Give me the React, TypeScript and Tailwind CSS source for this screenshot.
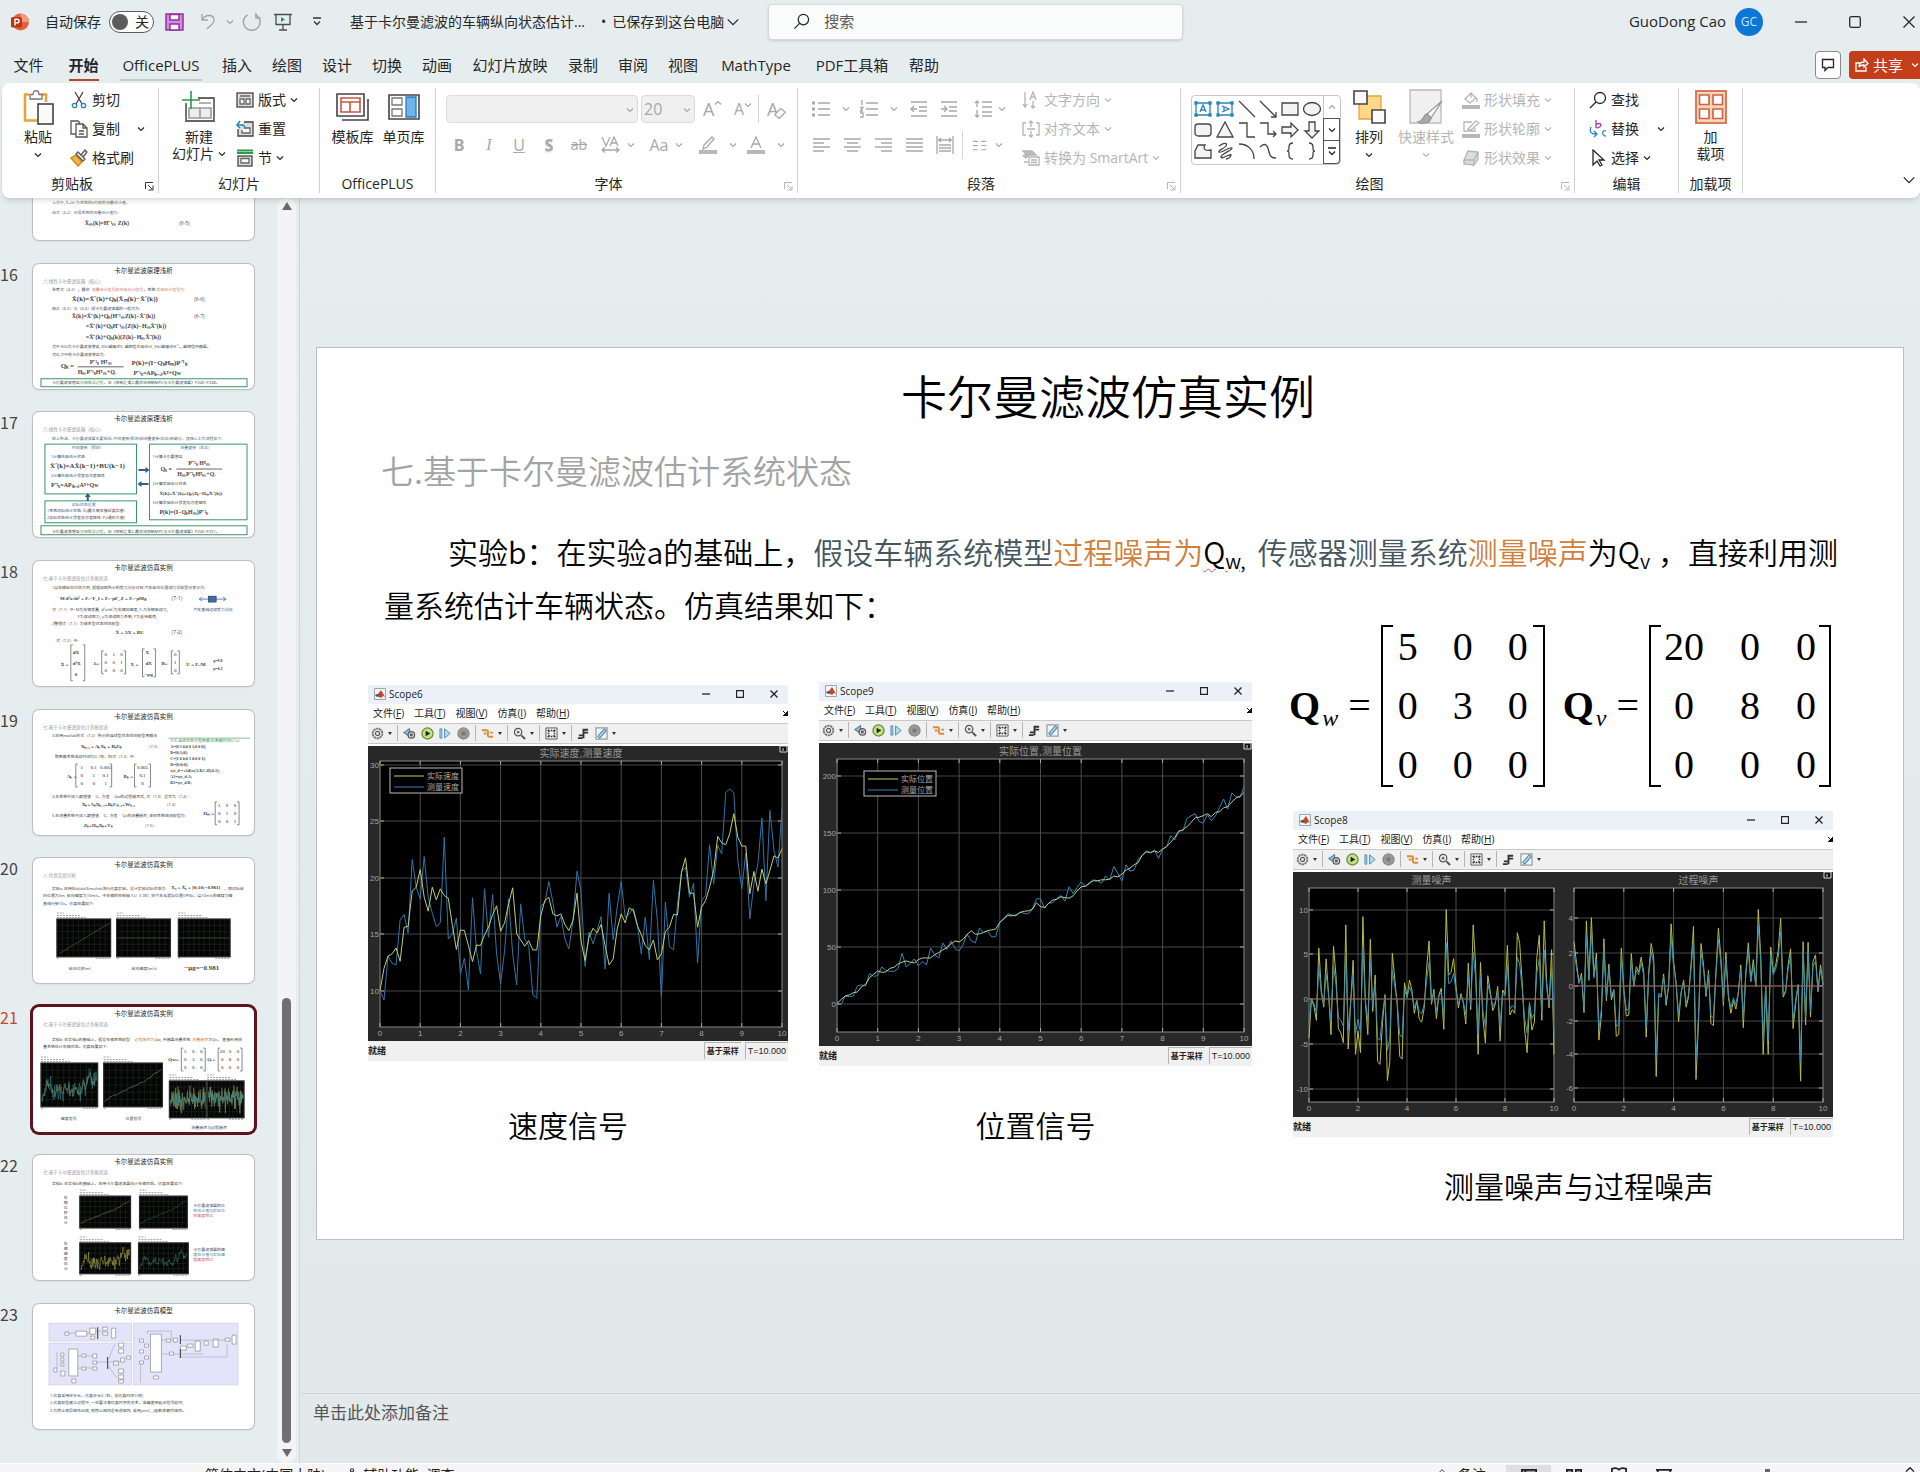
import type { ReactNode } from "react";

type Tab = { name: string; width: string; active?: boolean; marked?: boolean };
type Line = { x: number; y: number; t: string; s?: number; c?: string; math?: boolean };

const CJK = '"Open Sans","Noto Sans CJK SC",sans-serif';
const SERIF = '"Liberation Serif","Noto Sans CJK SC",serif';

const tabs: Tab[] = [
  { name: "文件", width: "w-[57px]" },
  { name: "开始", width: "w-[53px]", active: true },
  { name: "OfficePLUS", width: "w-[102px]", marked: true },
  { name: "插入", width: "w-[50px]" },
  { name: "绘图", width: "w-[50px]" },
  { name: "设计", width: "w-[50px]" },
  { name: "切换", width: "w-[50px]" },
  { name: "动画", width: "w-[50px]" },
  { name: "幻灯片放映", width: "w-[96px]" },
  { name: "录制", width: "w-[50px]" },
  { name: "审阅", width: "w-[50px]" },
  { name: "视图", width: "w-[50px]" },
  { name: "MathType", width: "w-[96px]" },
  { name: "PDF工具箱", width: "w-[96px]" },
  { name: "帮助", width: "w-[48px]" },
];

// Sampled traces, one point every 0.1 s
const speedReal = [960,893,857,850,832,872,770,768,662,650,597,680,722,650,688,655,675,683,765,837,778,780,825,873,823,825,793,770,732,706,782,757,700,652,790,808,827,810,838,838,735,690,680,730,736,730,762,780,750,668,810,870,800,773,787,762,825,883,865,775,730,757,712,720,765,792,825,838,808,868,850,783,770,732,733,605,562,668,668,770,710,690,650,600,498,517,523,490,430,500,527,527,670,603,662,596,640,600,556,563,535];
const speedMeas = [960,988,857,878,883,748,732,787,567,650,685,558,680,728,768,757,500,805,790,742,910,863,957,682,840,910,655,800,672,850,940,840,685,850,943,700,805,825,972,983,706,697,633,695,770,737,805,835,750,602,660,887,785,820,780,738,895,668,808,710,633,740,730,713,760,850,740,867,630,750,980,695,828,838,700,605,590,680,638,877,690,675,523,640,525,550,367,355,367,570,655,548,745,640,580,443,690,420,540,590,415];
const posReal = [1008,996,985,982,975,973,958,951,930,920,910,914,913,902,899,889,884,880,884,886,876,871,871,871,861,855,847,840,829,820,823,815,800,790,800,799,795,789,787,784,765,753,744,745,742,735,731,730,725,706,717,720,707,698,695,688,690,692,685,670,658,656,646,640,640,637,637,635,626,628,620,608,602,592,585,563,553,555,551,555,545,537,525,510,491,487,478,465,451,449,445,439,448,435,433,421,418,404,392,387,376];
const posMeas = [1008,1011,985,987,985,955,952,955,918,926,924,898,908,911,911,903,857,898,888,874,895,882,892,842,862,871,826,845,820,843,850,830,800,820,826,781,795,790,808,807,763,755,738,742,746,733,738,739,725,694,694,722,707,706,693,684,701,658,678,660,643,656,650,637,640,647,625,638,597,617,640,592,611,608,575,565,550,557,547,573,545,538,505,517,490,490,453,445,439,463,467,442,460,445,420,395,425,377,388,390,358];
const measNoise = [1225,1115,1135,1175,973,1090,1138,1003,1100,1215,968,1050,1198,1210,1237,908,1255,1130,1007,1270,1205,1265,885,1120,1215,948,1150,1048,1290,1298,1180,1103,1343,1290,987,1060,1130,1275,1283,1070,1110,1062,1090,1155,1120,1172,1180,1140,1030,953,1130,1088,1170,1105,1085,1200,865,1048,1040,1002,1080,1140,1100,1125,1185,1015,1145,908,1020,1270,1013,1170,1238,1050,1095,1148,1130,1080,1233,1090,1102,965,1160,1145,1155,930,960,1070,1200,1265,1130,1202,1180,1000,937,1175,897,1070,1140,977,1270];
const procNoise = [955,1015,1070,1043,1153,897,1060,888,1050,987,1230,1160,947,1120,1018,1118,1090,1220,1213,973,1090,1163,1160,988,1080,1025,1040,998,1040,1222,1040,960,1000,1332,1105,1110,1045,1133,1080,905,1010,1070,1178,1100,1062,1138,1110,1020,912,1340,1180,960,1020,1108,1035,1183,1190,1040,917,1000,1133,985,1110,1155,1120,1143,1100,1020,1195,1040,958,1065,1005,1080,865,1000,1270,1080,1270,970,1040,1020,980,890,1110,1095,1020,975,1198,1130,1075,1345,955,1188,957,1165,1010,992,1095,1020,1075];

const damp = (data: number[], mid: number, k: number) => data.map((v) => mid + (v - mid) * k);

function trace(data: number[], lo: number, hi: number, x: number, y: number, w: number, h: number) {
  return data
    .map((v, i) => `${(x + (w * i) / (data.length - 1)).toFixed(1)},${(y + (h * (v - lo)) / (hi - lo)).toFixed(1)}`)
    .join(" ");
}

/* ---------- small shared pieces ---------- */

function Chevron({ className = "", up = false }: { className?: string; up?: boolean }) {
  return (
    <svg viewBox="0 0 8 8" className={`h-2 w-2 shrink-0 ${className}`} fill="none" stroke="currentColor" strokeWidth="1.2">
      <path vectorEffect="non-scaling-stroke" d={up ? "M1 5.5 4 2.5 7 5.5" : "M1 2.5 4 5.5 7 2.5"} />
    </svg>
  );
}

function Icon({ children, size = "h-[18px] w-[18px]", box = "0 0 18 18" }: { children: ReactNode; size?: string; box?: string }) {
  return (
    <svg viewBox={box} className={`${size} shrink-0`} fill="none" stroke="currentColor" strokeWidth="1.3">
      {children}
    </svg>
  );
}

function Divider() {
  return <span className="h-7 w-px shrink-0 bg-[#d4d4d4]" />;
}

function Group({ label, width, children, launcher }: { label: string; width: string; children: ReactNode; launcher?: "on" | "off" }) {
  return (
    <section className={`${width} relative flex shrink-0 flex-col border-r border-[#d0d2d3]`}>
      <div className="flex flex-1">{children}</div>
      <h2 className={`h-[18px] text-center text-sm leading-[18px] ${launcher ? "pr-4" : ""}`}>{label}</h2>
      {launcher && (
        <button
          aria-label={`${label}设置`}
          className={`absolute right-1 bottom-0.5 ${launcher === "on" ? "text-[#333]" : "text-[#b5b5b5]"}`}
        >
          <svg viewBox="0 0 9 9" className="h-[9px] w-[9px]" fill="none" stroke="currentColor">
            <path d="M.5 7V.5H8M3 3l4 4M8 3.5V8H3.5" />
          </svg>
        </button>
      )}
    </section>
  );
}

function BigButton({ icon, lines, width, caret, below, off }: { icon: ReactNode; lines: string[]; width: string; caret?: boolean; below?: boolean; off?: boolean }) {
  return (
    <button className={`${width} flex flex-col items-center text-sm leading-[17px] ${off ? "text-[#b5b5b5]" : "text-[#262626]"}`}>
      <span className="flex h-10 items-center pb-0.5">{icon}</span>
      {lines.map((l, i) => (
        <span key={l} className="flex items-center gap-1 whitespace-nowrap">
          {l}
          {caret && i === lines.length - 1 && <Chevron />}
        </span>
      ))}
      {below && <Chevron className="mt-1.5" />}
    </button>
  );
}

function RowButton({ icon, text, caret, caretGap = "ml-1", off }: { icon: ReactNode; text: string; caret?: boolean; caretGap?: string; off?: boolean }) {
  return (
    <button className={`flex h-6 items-center text-sm whitespace-nowrap ${off ? "text-[#b5b5b5]" : "text-[#262626]"}`}>
      {icon}
      <span className="ml-1">{text}</span>
      {caret && <Chevron className={caretGap} />}
    </button>
  );
}

/* ---------- title bar and tabs ---------- */

function TitleBar() {
  return (
    <header className="flex h-[43px] shrink-0 items-center text-sm">
      <svg viewBox="0 0 18 18" className="ml-[11px] h-[18px] w-[18px]">
        <circle cx="9.5" cy="9" r="8.5" fill="#e2613c" />
        <path d="M9.5 .5A8.5 8.5 0 0 1 18 9H9.5z" fill="#f39a7e" />
        <rect x="0" y="4" width="11" height="10.5" rx="1.5" fill="#b5371a" />
        <path d="M4 12.5V6.2h2.2a1.8 1.8 0 0 1 0 3.7H4" fill="none" stroke="#fff" strokeWidth="1.4" />
      </svg>
      <label className="ml-4 flex items-center">
        自动保存
        <input type="checkbox" role="switch" className="peer sr-only" />
        <span className="ml-2 flex h-[22px] w-[45px] items-center justify-between rounded-full border border-[#5c5c5c] bg-white pr-1 pl-0.5">
          <span className="h-4 w-4 rounded-full bg-[#5c5c5c]" />
          关
        </span>
      </label>
      <button aria-label="保存" className="ml-[11px]">
        <svg viewBox="0 0 19 18" className="h-[18px] w-[19px]" fill="#d58be0" stroke="#93329e" strokeWidth="1.5">
          <path d="M1 1h17v16H1z" />
          <path d="M5 1.5h9V7H5z" fill="#fff" />
          <path d="M5 11h9v6H5z" fill="#fff" />
        </svg>
      </button>
      <button aria-label="撤消" className="ml-4 flex items-center gap-2 text-[#a0a5a7]">
        <Icon>
          <path d="M2 1v6h6M2 7C5 1 14 1 14 7c0 4-4 6-7 9" />
        </Icon>
        <Chevron />
      </button>
      <button aria-label="重复" className="ml-2 text-[#a0a5a7]">
        <Icon size="h-5 w-5">
          <path d="M12.5 1v4.500h4.500M12.5 2.500A7.500 7.500 0 1 1 5 2.500" />
        </Icon>
      </button>
      <button aria-label="从头开始" className="ml-3 text-[#4c4c4c]">
        <Icon>
          <path d="M0 1.500h18M2 1.500v10h14v-10M9 11.500v5.500M5 17h8" />
          <path d="M7 4v5l4-2.500z" fill="#2c9a4b" stroke="none" />
        </Icon>
      </button>
      <button aria-label="自定义快速访问工具栏" className="ml-5 text-[#333]">
        <Icon size="h-2.5 w-2.5" box="0 0 10 10">
          <path d="M1 1h8M2 4.500 5 7.500 8 4.500" />
        </Icon>
      </button>
      <h1 className="ml-7 whitespace-nowrap">基于卡尔曼滤波的车辆纵向状态估计...</h1>
      <button className="ml-4 flex items-center whitespace-nowrap">
        •<span className="ml-1.5">已保存到这台电脑</span>
        <Chevron className="ml-0.5 h-3.5 w-3.5" />
      </button>
      <label className="ml-7 flex h-9 w-[415px] items-center rounded border border-[#d5d8d9] bg-[#fafbfb] pl-6 shadow-sm">
        <Icon size="h-[17px] w-[17px]">
          <path d="M7 11 1.500 16.500" />
          <circle cx="11" cy="7" r="5.5" />
        </Icon>
        <input aria-label="搜索" placeholder="搜索" className="ml-3.5 flex-1 bg-transparent text-[15px] outline-none placeholder:text-[#5c5c5c]" />
      </label>
      <span className="ml-auto text-[15px]">GuoDong Cao</span>
      <button className="ml-[9px] h-7 w-7 rounded-full bg-[#0a78d4] text-xs text-[#cfe6fa]">GC</button>
      <button aria-label="最小化" className="ml-8">
        <Icon size="h-3 w-3" box="0 0 12 12"><path d="M0 6h12" /></Icon>
      </button>
      <button aria-label="最大化" className="ml-[42px]">
        <Icon size="h-3 w-3" box="0 0 12 12"><rect x=".7" y=".7" width="10.6" height="10.6" rx="1.5" /></Icon>
      </button>
      <button aria-label="关闭" className="mr-[5px] ml-[42px]">
        <Icon size="h-3 w-3" box="0 0 12 12"><path d="m.5.5 11 11M11.500.5l-11 11" /></Icon>
      </button>
    </header>
  );
}

function TabBar() {
  return (
    <nav className="flex h-10 shrink-0 items-center text-[15px]">
      {tabs.map((tab) => (
        <button key={tab.name} className={`${tab.width} flex h-9 flex-col items-center justify-end whitespace-nowrap ${tab.active ? "font-bold" : ""}`}>
          <span className="leading-7">{tab.name}</span>
          <span className={`h-0.5 ${tab.active ? "w-[30px] bg-[#b7472a]" : tab.marked ? "w-[82px] bg-[#c5c8c9]" : "w-0"}`} />
        </button>
      ))}
      <button aria-label="批注" className="mt-1 ml-auto flex h-7 w-[26px] items-center justify-center rounded border border-[#8a8a8a] bg-white">
        <Icon size="h-3.5 w-3.5" box="0 0 14 14"><path d="M1.500 1.500h11v8H7l-3 3v-3H1.500z" /></Icon>
      </button>
      <button className="mt-1 ml-2 flex h-7 w-[71px] items-center rounded-l bg-[#c43e1c] pl-1.5 text-white">
        <Icon size="h-3.5 w-3.5" box="0 0 14 14"><path d="M5 5H1v8h10V9M4 9c0-4 3-5 5-5V1l4 4.500L9 9V7C7 7 5 7 4 9z" /></Icon>
        <span className="ml-1 whitespace-nowrap">共享</span>
        <Chevron className="ml-2" />
      </button>
    </nav>
  );
}

/* ---------- ribbon ---------- */

function ClipboardGroup() {
  return (
    <Group label="剪贴板" width="w-[157px]" launcher="on">
      <div className="ml-[18px]">
        <BigButton
          width="w-9"
          lines={["粘贴"]}
          below
          icon={
            <Icon size="h-[35px] w-[31px]" box="0 0 31 35">
              <path d="M6 4.500H2v26h12M18 4.500h5V12" stroke="#e7a33a" strokeWidth="2.6" />
              <path d="M7 9V4.500h3c0-5 6-5 6 0h3V9z" fill="#fff" stroke="#777" />
              <rect x="15" y="14" width="15" height="20" fill="#fafafa" stroke="#444" strokeWidth="1.6" />
            </Icon>
          }
        />
      </div>
      <div className="ml-3.5 flex flex-col gap-[5px]">
        <RowButton
          text="剪切"
          icon={
            <Icon>
              <path d="M5 1 12 13M13 1 6 13" stroke="#444" />
              <circle cx="4.5" cy="14.5" r="2.2" stroke="#2a85b8" />
              <circle cx="13.5" cy="14.5" r="2.2" stroke="#2a85b8" />
            </Icon>
          }
        />
        <RowButton
          text="复制"
          caret
          caretGap="ml-[17px]"
          icon={
            <Icon>
              <path d="M6 14H1V1h7l2 2M6 4h7l4 4v9H6zM13 4v4h4M9 11h5M9 14h5" stroke="#555" />
            </Icon>
          }
        />
        <RowButton
          text="格式刷"
          icon={
            <Icon>
              <path d="m1 9 7 8 4-4-6-7z" fill="#f0b24a" stroke="#c98412" />
              <path d="m6 5 7 7 2-2-7-7zM11 6l4-5 2 2-4 5" fill="#fff" stroke="#555" />
            </Icon>
          }
        />
      </div>
    </Group>
  );
}

function SlidesGroup() {
  return (
    <Group label="幻灯片" width="w-[161px]">
      <div className="ml-3">
        <BigButton
          width="w-14"
          lines={["新建", "幻灯片"]}
          caret
          icon={
            <Icon size="h-9 w-[34px]" box="0 0 34 36">
              <path d="M4 14v18h28V9H16" stroke="#666" strokeWidth="1.8" />
              <path d="M7 19h22v10H7zM18 19v10M17 14h12" stroke="#999" strokeWidth="1.6" fill="#eee" />
              <path d="M9 2v18M0 11h18" stroke="#2c9a4b" strokeWidth="1.6" />
            </Icon>
          }
        />
      </div>
      <div className="ml-[9px] flex flex-col gap-[5px]">
        <RowButton text="版式" caret icon={
          <Icon><rect x="1" y="2" width="16" height="14" fill="#ddd" stroke="#444" /><path d="M4 5h10M4 8h4v5H4zM10 8h4v5h-4z" stroke="#666" fill="#fff" /></Icon>
        } />
        <RowButton text="重置" icon={
          <Icon><path d="M8 2h9v14H2V9" fill="#ddd" stroke="#444" /><path d="M9 8h5v5H6v-3" stroke="#666" fill="#fff" /><path d="M1 5h6M4 1 1 5l3 3M5 5c4 0 4 2 4 4" stroke="#2a85b8" strokeWidth="1.6" /></Icon>
        } />
        <RowButton text="节" caret icon={
          <Icon><path d="M1 1.500h16M1 4h16" stroke="#2c9a4b" strokeWidth="2" /><rect x="2" y="7" width="14" height="10" fill="#ddd" stroke="#444" /><path d="M5 9.500h8V14H5z" stroke="#666" fill="#fff" /></Icon>
        } />
      </div>
    </Group>
  );
}

function PlusGroup() {
  return (
    <Group label="OfficePLUS" width="w-[116px]">
      <div className="ml-[7px] flex">
        <BigButton width="w-[51px]" lines={["模板库"]} icon={
          <Icon size="h-8 w-[34px]" box="0 0 34 32">
            <path d="M1 3h27v22H1z" stroke="#444" strokeWidth="1.6" />
            <path d="M5 7h19v4H5zM5 11h9v10H5zM14 11h10v10H14z" stroke="#c9553f" strokeWidth="1.6" />
            <path d="M6 29h26V8" stroke="#444" strokeWidth="1.6" />
          </Icon>
        } />
        <BigButton width="w-[51px]" lines={["单页库"]} icon={
          <Icon size="h-8 w-8" box="0 0 32 32">
            <path d="M1 4h30v24H1z" stroke="#444" strokeWidth="1.6" />
            <path d="M4 7h10v7H4zM4 18h10v7H4z" stroke="#777" />
            <path d="M18 6h10v20H18z" fill="#6fb4ea" stroke="#2a7ab8" />
          </Icon>
        } />
      </div>
    </Group>
  );
}

function FontGroup() {
  return (
    <Group label="字体" width="w-[362px]" launcher="off">
      <div className="ml-2 flex flex-col gap-2 pt-[7px] text-[#a8a8a8]">
        <div className="flex h-7 items-center">
          <div className="relative ml-0.5">
            <select aria-label="字体" disabled className="h-7 w-[192px] appearance-none rounded border border-[#dcdcdc] bg-[#f0f0f0]">
              <option></option>
            </select>
            <Chevron className="pointer-events-none absolute top-[11px] right-1" />
          </div>
          <div className="relative ml-[3px]">
            <select aria-label="字号" disabled className="h-7 w-[54px] appearance-none rounded border border-[#dcdcdc] bg-[#f0f0f0] pl-0.5 text-base">
              <option>20</option>
            </select>
            <Chevron className="pointer-events-none absolute top-[11px] right-1" />
          </div>
          <button aria-label="增大字号" className="ml-2 flex w-6 text-lg">A<Chevron up className="mt-1" /></button>
          <button aria-label="减小字号" className="ml-[7px] flex w-6 text-base">A<Chevron className="mt-1" /></button>
          <span className="flex"><Divider /></span>
          <button aria-label="清除格式" className="ml-2 flex w-6 items-center text-lg">
            A
            <Icon size="-ml-1 mt-2 h-3 w-3"><path d="m1 12 9-10 7 6-9 9z" strokeWidth="2" fill="#fff" /></Icon>
          </button>
        </div>
        <div className="flex h-7 items-center text-base">
          <button className="w-[30px] font-bold">B</button>
          <button className="w-[30px] font-['Liberation_Serif',serif] italic">I</button>
          <button className="w-[30px] underline">U</button>
          <button className="w-[30px] font-bold text-shadow-sm">S</button>
          <button className="w-[30px] text-sm line-through">ab</button>
          <button aria-label="字符间距" className="flex w-12 items-center justify-center gap-1.5 text-sm">
            <Icon box="0 0 20 18" size="h-[18px] w-5"><path d="m1 1 4 9L9 1M9 10l4-9 4 9M10.500 7h5M1 14h17M4 11.500 1 14l3 2.500M15 11.500l3 2.500-3 2.500" /></Icon><Chevron />
          </button>
          <button aria-label="更改大小写" className="flex w-12 items-center justify-center gap-1.5 text-base">Aa<Chevron /></button>
          <span className="ml-1"><Divider /></span>
          <button aria-label="突出显示" className="flex w-12 items-center justify-center gap-3">
            <Icon><path d="m5 9 8-8 2 2-7 8-4 2z" /><path d="M0 16h18" strokeWidth="4" stroke="#b8b8b8" /></Icon><Chevron />
          </button>
          <button aria-label="字体颜色" className="flex w-12 items-center justify-center gap-3">
            <Icon><path d="m4 12 5-11 5 11M6 8h6" /><path d="M0 16h18" strokeWidth="4" stroke="#b8b8b8" /></Icon><Chevron />
          </button>
        </div>
      </div>
    </Group>
  );
}

function ParagraphGroup() {
  return (
    <Group label="段落" width="w-[383px]" launcher="off">
      <div className="ml-3.5 flex w-[196px] flex-col gap-2 pt-[7px] text-[#a8a8a8]">
        <div className="flex h-7 items-center">
          <button aria-label="项目符号" className="flex items-center gap-3">
            <Icon><path d="M6 3h12M6 9h12M6 15h12" /><path d="M0 3h3M0 9h3M0 15h3" strokeWidth="3" /></Icon><Chevron />
          </button>
          <button aria-label="编号" className="ml-2.5 flex items-center gap-3">
            <Icon><path d="M6 3h12M6 9h12M6 15h12M1 1h1v4M0 7.500h3L.5 11H3M0 13h3v4H0" /></Icon><Chevron />
          </button>
          <span className="ml-1"><Divider /></span>
          <button aria-label="减少缩进" className="ml-2">
            <Icon><path d="M1 2h16M9 7h8M9 11h8M1 16h16M7 9H1M4 6 1 9l3 3" /></Icon>
          </button>
          <button aria-label="增加缩进" className="ml-3">
            <Icon><path d="M1 2h16M9 7h8M9 11h8M1 16h16M1 9h6M4 6l3 3-3 3" /></Icon>
          </button>
          <span className="ml-2"><Divider /></span>
          <button aria-label="行距" className="ml-2 flex items-center gap-1.5">
            <Icon><path d="M8 2h10M8 7h10M8 12h10M8 16h10M3 1v6M1 3l2-2 2 2M3 10v7M1 15l2 2 2-2" /></Icon><Chevron />
          </button>
        </div>
        <div className="flex h-7 items-center gap-[13px]">
          <button aria-label="左对齐"><Icon><path d="M1 3h17M1 7h11M1 11h17M1 15h11" /></Icon></button>
          <button aria-label="居中"><Icon><path d="M1 3h17M4 7h11M1 11h17M4 15h11" /></Icon></button>
          <button aria-label="右对齐"><Icon><path d="M1 3h17M7 7h11M1 11h17M7 15h11" /></Icon></button>
          <button aria-label="两端对齐"><Icon><path d="M1 3h17M1 7h17M1 11h17M1 15h17" /></Icon></button>
          <button aria-label="分散对齐" className="flex items-center gap-2">
            <Icon><path d="M1 0v18M17 0v18M2 4h14M5 2 3 4l2 2M13 2l2 2-2 2M3 9h12M3 12h12M3 15h12" /></Icon><Divider />
          </button>
          <button aria-label="分栏" className="-ml-1 flex items-center gap-2">
            <Icon size="h-[15px] w-[15px]"><path d="M1 4h6M1 9h6M1 14h6M11 4h6M11 9h6M11 14h6" /></Icon><Chevron />
          </button>
        </div>
      </div>
      <div className="ml-3.5 flex flex-col gap-[5px]">
        <RowButton off caret text="文字方向" icon={<Icon><path d="M3 1v15M1 13l2 3 2-3M8 9l3-8 3 8M9 6h4M11 10v7M9 15l2 2 2-2" /></Icon>} />
        <RowButton off caret text="对齐文本" icon={<Icon><path d="M4 3H1v12h3M14 3h3v12h-3M5 9h8M9 1v6M7 3l2-2 2 2M9 17v-6M7 15l2 2 2-2" /></Icon>} />
        <RowButton off caret text="转换为 SmartArt" icon={<Icon><path d="M1 2h9l4 4H7L4 9 1 7l3-2zM2 13h4" fill="#bbb" /><path d="M7 8h10v8H7zM9 11h6M9 13.500h6" fill="#fff" /></Icon>} />
      </div>
    </Group>
  );
}

const shapes: ReactNode[] = [
  <g stroke="#2a85b8"><path d="M2 3h14v12H2z" /><path d="M6 12l3-7 3 7M7 10h4" /><path d="M1 2h2v2H1zM15 2h2v2h-2zM1 14h2v2H1zM15 14h2v2h-2z" fill="#2a85b8" /></g>,
  <g stroke="#2a85b8"><path d="M2 3h14v12H2z" /><path d="M6 6l7 3-7 3M8 7v4" /><path d="M1 2h2v2H1zM15 2h2v2h-2zM1 14h2v2H1zM15 14h2v2h-2z" fill="#2a85b8" /></g>,
  <path d="m1 1 16 16" />,
  <path d="m1 1 16 16M17 12v5h-5" />,
  <path d="M1 3h16v12H1z" fill="#f4f4f4" />,
  <ellipse cx="9" cy="9" rx="8.5" ry="6.5" fill="#f4f4f4" />,
  <rect x="1" y="3" width="16" height="12" rx="3" fill="#f4f4f4" />,
  <path d="M9 1 17 16H1z" fill="#f4f4f4" />,
  <path d="M1 2h8v14h8" />,
  <path d="M1 2h8v11h8M14 10l3 3-3 3" />,
  <path d="M1 6h9V2l7 7-7 7v-4H1z" fill="#f4f4f4" />,
  <path d="M6 1v9H2l7 7 7-7h-4V1z" fill="#f4f4f4" />,
  <path d="M4 3h7c-3 5 2 6 6 5v8H1V9z" fill="#f4f4f4" />,
  <path d="M3 4c5-4 9-3 7 0S2 8 3 10s12-6 13-4-11 6-11 9 10-4 10-2-3 4-5 4" />,
  <path d="M1 2c9 0 15 6 15 15" />,
  <path d="M1 5c6-6 8 0 9 5s3 6 7 6" />,
  <path d="M12 1c-3 0-4 1-4 4s0 4-2 4c2 0 2 1 2 4s1 4 4 4" />,
  <path d="M6 1c3 0 4 1 4 4s0 4 2 4c-2 0-2 1-2 4s-1 4-4 4" />,
];

function DrawingGroup() {
  return (
    <Group label="绘图" width="w-[394px]" launcher="off">
      <div className="mt-[7px] ml-[10px] flex h-[70px] w-[150px] rounded border border-[#c8c8c8]">
        <div className="grid flex-1 grid-cols-6 place-items-center py-0.5 text-[#444]">
          {shapes.map((s, i) => (
            <button key={i} aria-label={`形状 ${i + 1}`}><Icon size="h-[18px] w-[18px]">{s}</Icon></button>
          ))}
        </div>
        <div className="flex w-[17px] flex-col">
          <button aria-label="上一行" className="flex flex-1 items-center justify-center border-l border-[#c8c8c8] text-[#aaa]"><Chevron up /></button>
          <button aria-label="下一行" className="flex flex-1 items-center justify-center border border-[#555]"><Chevron /></button>
          <button aria-label="其他" className="flex flex-1 items-center justify-center rounded-br border border-t-0 border-[#555]">
            <Icon size="h-2.5 w-2.5" box="0 0 10 10"><path d="M1 1h8M2 4.500 5 7.500 8 4.500" /></Icon>
          </button>
        </div>
      </div>
      <div className="ml-[6px] flex gap-[7px]">
        <BigButton width="w-11" lines={["排列"]} below icon={
          <Icon size="h-[34px] w-[33px]" box="0 0 33 34">
            <path d="M6 6h22v23H6z" fill="#fbd88a" stroke="#e0a53c" />
            <path d="M1 1h13v13H1zM19 20h13v13H19z" fill="#fafafa" stroke="#444" strokeWidth="1.6" />
          </Icon>
        } />
        <BigButton off width="w-14" lines={["快速样式"]} below icon={
          <Icon size="h-[36px] w-[34px]" box="0 0 34 36">
            <path d="M1 1h31v33H1z" fill="#f0f0f0" stroke="#bbb" />
            <path d="M33 12 22 29l-4-4z" fill="#fff" stroke="#999" />
            <path d="M18 25c-4 0-3 7-9 8 5 3 12 1 13-4z" fill="#aaa" stroke="#999" />
          </Icon>
        } />
      </div>
      <div className="ml-2 flex flex-col gap-[5px]">
        <RowButton off caret text="形状填充" icon={<Icon><path d="m3 8 6-6 5 5-6 5zM9 2v5M15 7v4" /><path d="M0 16h18" strokeWidth="4" stroke="#b8b8b8" /></Icon>} />
        <RowButton off caret text="形状轮廓" icon={<Icon><path d="M10 2H2v9h11V8M6 9l8-8 3 2-8 7z" /><path d="M0 16h18" strokeWidth="4" stroke="#b8b8b8" /></Icon>} />
        <RowButton off caret text="形状效果" icon={<Icon><path d="m6 2 10 1-4 8H2zM12 11l4-8v7l-4 6zM2 11v4l10 1v-5" fill="#ddd" /></Icon>} />
      </div>
    </Group>
  );
}

function EditGroup() {
  return (
    <Group label="编辑" width="w-[104px]">
      <div className="ml-[14px] flex flex-col gap-[5px]">
        <RowButton text="查找" icon={<Icon><path d="M7 11 1 17" /><circle cx="11" cy="7" r="5.5" /></Icon>} />
        <RowButton text="替换" caret caretGap="ml-[18px]" icon={
          <Icon>
            <path d="M7 0v8M7 5c1-2 5-2 5 0s-4 4-5 2" stroke="#a33fae" />
            <path d="M17 11c-4-2-5 5 0 5M2 7c-2 5 0 7 5 7M5 11l3 3-3 3" stroke="#2a85c8" />
          </Icon>
        } />
        <RowButton text="选择" caret icon={<Icon><path d="M4 1v15l4-4 3 5 2-1-3-5h5z" /></Icon>} />
      </div>
    </Group>
  );
}

function AddinGroup() {
  return (
    <Group label="加载项" width="w-16">
      <BigButton width="w-16" lines={["加", "载项"]} icon={
        <Icon size="h-[34px] w-8" box="0 0 32 34">
          <rect x="1" y="1" width="30" height="32" fill="#f9d3bd" stroke="#d2704a" strokeWidth="1.8" />
          <path d="M4.500 5h9.500v9.500H4.500zM18 5h9.500v9.500H18zM4.500 19h9.500v9.500H4.500zM18 19h9.500v9.500H18z" fill="#fff" stroke="#c9643f" strokeWidth="1.6" />
        </Icon>
      } />
    </Group>
  );
}

function Ribbon() {
  return (
    <div className="relative z-10 ml-0.5 flex h-[115px] shrink-0 rounded-lg bg-white py-[5px] shadow-md">
      <ClipboardGroup />
      <SlidesGroup />
      <PlusGroup />
      <FontGroup />
      <ParagraphGroup />
      <DrawingGroup />
      <EditGroup />
      <AddinGroup />
      <button aria-label="折叠功能区" className="mr-1 mb-1.5 ml-auto self-end">
        <Chevron className="h-3.5 w-3.5" />
      </button>
    </div>
  );
}

/* ---------- thumbnails ---------- */

function Lines({ items }: { items: Line[] }) {
  return (
    <>
      {items.map((l, i) => (
        <text
          key={i}
          x={l.x}
          y={l.y}
          fontSize={l.s ?? 4}
          fill={l.c ?? "#444"}
          fontFamily={l.math ? SERIF : CJK}
          fontWeight={l.math ? 700 : 400}
        >
          {l.t}
        </text>
      ))}
    </>
  );
}

function ThumbTitle({ title, sub }: { title: string; sub?: string }) {
  return (
    <>
      <text x="111" y="9" fontSize="6.5" textAnchor="middle" fill="#222" fontFamily={CJK}>{title}</text>
      {sub && <text x="10" y="19" fontSize="4.6" fill="#999" fontFamily={CJK}>{sub}</text>}
    </>
  );
}

function MiniScope({ x, y, w, h, children }: { x: number; y: number; w: number; h: number; children?: ReactNode }) {
  const cols = Array.from({ length: 9 }, (_, i) => x + ((i + 1) * w) / 10);
  const rows = Array.from({ length: 5 }, (_, i) => y + 6 + ((i + 1) * (h - 6)) / 6);
  return (
    <g>
      <path d={`M${x} ${y}h7M${x} ${y + 2.5}h24M${x} ${y + 4.5}h30M${x} ${y + h + 1.5}h3M${x + w - 15} ${y + h + 1.5}h15`} stroke="#888" strokeWidth=".8" strokeDasharray="2 1" />
      <rect x={x} y={y + 6} width={w} height={h - 6} fill="#050505" stroke="#2a2a2a" strokeWidth="1.2" />
      {cols.map((c) => <path key={c} d={`M${c} ${y + 7}v${h - 8}`} stroke="#1e2a22" strokeWidth=".6" />)}
      {rows.map((r) => <path key={r} d={`M${x + 1} ${r}h${w - 2}`} stroke="#1e2a22" strokeWidth=".6" />)}
      <g fill="none" strokeWidth=".5">{children}</g>
    </g>
  );
}

function Brackets({ x, y, w, h }: { x: number; y: number; w: number; h: number }) {
  return <path d={`M${x + 2} ${y}h-2v${h}h2M${x + w - 2} ${y}h2v${h}h-2`} fill="none" stroke="#555" strokeWidth=".7" />;
}

function MiniMatrix({ x, y, rows, step = 8 }: { x: number; y: number; rows: string[][]; step?: number }) {
  return (
    <g>
      <Brackets x={x} y={y} w={step * rows[0].length} h={23} />
      {rows.map((r, i) =>
        r.map((c, j) => (
          <text key={`${i}${j}`} x={x + step * (j + 0.5)} y={y + 5 + i * 8} fontSize="5" textAnchor="middle" fill="#222" fontFamily={SERIF}>{c}</text>
        ))
      )}
    </g>
  );
}

const thumb15: Line[] = [
  { x: 19, y: 89, t: "上式中,  X̂ₘ(k) 为系统的k时刻的测量估计值。", c: "#557766" },
  { x: 19, y: 99, t: "由式（6-4）可得系统的测量估计值为:", c: "#4f6473" },
  { x: 52, y: 110, t: "X̂ₘ(k)=H⁻¹ₘ Z(k)", s: 6, math: true },
  { x: 147, y: 110, t: "(6-5)", s: 5 },
];

const thumb16: Line[] = [
  { x: 19, y: 27, t: "参考式（4-2），最优" },
  { x: 59, y: 27, t: "测量估计信号和先验估计信号", c: "#c9775d" },
  { x: 111, y: 27, t: "，系统" },
  { x: 124, y: 27, t: "后验估计信号为:", c: "#c9775d" },
  { x: 39, y: 37, t: "X̂(k)=X̂⁻(k)+Qₖ(X̂ₘ(k)−X̂⁻(k))", s: 7, math: true },
  { x: 162, y: 37, t: "(6-6)", s: 5 },
  { x: 19, y: 46, t: "结合（6-5）与（6-6）得卡尔曼滤波器的一般式为:" },
  { x: 39, y: 54, t: "X̂(k)=X̂⁻(k)+Qₖ(H⁻¹ₘZ(k)−X̂⁻(k))", s: 6, math: true },
  { x: 162, y: 54, t: "(6-7)", s: 5 },
  { x: 53, y: 64, t: "=X̂⁻(k)+QₖH⁻¹ₘ(Z(k)−HₘX̂⁻(k))", s: 6, math: true },
  { x: 53, y: 75, t: "=X̂⁻(k)+Qₖ(k)(Z(k)−HₘX̂⁻(k))", s: 6, math: true },
  { x: 19, y: 84, t: "式中 K(k)为卡尔曼滤波增益, K(k)越接近0, 越相信先验估计, K(k)越接近H⁻¹ₘ, 越相信传感器。", s: 4 },
  { x: 19, y: 92, t: "式(6-7)中的卡尔曼滤波增益为:" },
  { x: 28, y: 104, t: "Qₖ =", s: 7, math: true },
  { x: 57, y: 100, t: "P⁻¹ₖ Hᵀₘ", s: 6, math: true },
  { x: 45, y: 110, t: "HₘP⁻¹ₖHᵀₘ+Qᵥ", s: 6, math: true },
  { x: 99, y: 101, t: "P(k)=(I−QₖHₘ)P⁻¹ₖ", s: 7, math: true },
  { x: 101, y: 111, t: "P⁻¹ₖ=AP₍ₖ₋₁₎Aᵀ+Qw", s: 6, math: true },
  { x: 19, y: 120, t: "卡尔曼滤波增益", s: 4 },
  { x: 47, y: 120, t: "详细推导过程", s: 4, c: "#5a9a6d" },
  { x: 71, y: 120, t: "，见《控制之美2-最优化控制MPC与卡尔曼滤波器》P240~P248。", s: 4 },
];

const thumb17: Line[] = [
  { x: 19, y: 28, t: "综上所述，卡尔曼滤波器主要包括: 时间更新(预测)和测量更新(校正)两部分，其核心工作流程如下:", c: "#4f6473" },
  { x: 39, y: 37, t: "时间更新（预测）", c: "#3a6fa5" },
  { x: 18, y: 46, t: "1计算先验估计状态", s: 4 },
  { x: 17, y: 56, t: "X̂⁻(k)=AX̂(k−1)+BU(k−1)", s: 7, math: true },
  { x: 18, y: 65, t: "2计算先验估计误差协方差矩阵", s: 4 },
  { x: 18, y: 75, t: "P⁻¹ₖ=AP₍ₖ₋₁₎Aᵀ+Qw", s: 6, math: true },
  { x: 39, y: 94, t: "初始状态设置", c: "#3a6fa5" },
  { x: 14, y: 100, t: "1系统初始估计状态: X̂₀(最大概率接近真实值)", s: 4 },
  { x: 14, y: 107, t: "2初始状态估计误差协方差矩阵: P₀(通较大值)", s: 4 },
  { x: 148, y: 37, t: "测量更新（校正）", c: "#3a6fa5" },
  { x: 120, y: 46, t: "1计算卡尔曼增益", s: 4 },
  { x: 128, y: 59, t: "Qₖ =", s: 6, math: true },
  { x: 156, y: 53, t: "P⁻¹ₖ Hᵀₘ", s: 6, math: true },
  { x: 145, y: 64, t: "HₘP⁻¹ₖHᵀₘ+Qᵥ", s: 6, math: true },
  { x: 120, y: 73, t: "2计算后验估计状态", s: 4 },
  { x: 127, y: 83, t: "X̂(k)=X̂⁻(k)+Qₖ(Zₖ−HₘX̂⁻(k))", s: 5, math: true },
  { x: 120, y: 92, t: "3计算后验估计误差协方差矩阵", s: 4 },
  { x: 127, y: 102, t: "P(k)=(I−QₖHₘ)P⁻¹ₖ", s: 6, math: true },
  { x: 19, y: 121, t: "卡尔曼滤波增益", s: 4 },
  { x: 47, y: 121, t: "详细推导过程", s: 4, c: "#5a9a6d" },
  { x: 71, y: 121, t: "，见《控制之美2-最优化控制MPC与卡尔曼滤波器》P240~P251。", s: 4 },
];

const thumb18: Line[] = [
  { x: 19, y: 28, t: "1以车辆纵向位移为例, 根据如图所示的受力分析可知 汽车纵向位置动力学模型可表示为:" },
  { x: 27, y: 39, t: "M d²x/dt² = Fₓ−F_f = Fₓ−μF_Z = Fₓ−μMg", s: 5, math: true },
  { x: 136, y: 39, t: "（7-1）", s: 5 },
  { x: 19, y: 50, t: "式（7-1）中: M为车辆质量, d²x/dt²为车辆加速度, Fₓ为车辆驱动力," },
  { x: 45, y: 57, t: "F为滚动阻力; μ为滚动阻力系数; F为支持载荷;" },
  { x: 161, y: 50, t: "汽车直线运动受力分析" },
  { x: 19, y: 64, t: "2整理式（7-1）为微系型状态空间模型:" },
  { x: 83, y: 73, t: "Ẋ = AX + BU", s: 5, math: true },
  { x: 136, y: 73, t: "（7-2）", s: 5 },
  { x: 23, y: 81, t: "式（7-2）中:" },
  { x: 28, y: 105, t: "Ẋ =", s: 5, math: true },
  { x: 40, y: 93, t: "dX", s: 5, math: true },
  { x: 40, y: 104, t: "d²X", s: 5, math: true },
  { x: 42, y: 115, t: "0", s: 5, math: true },
  { x: 60, y: 104, t: "A=", s: 5, math: true },
  { x: 98, y: 105, t: "X =", s: 5, math: true },
  { x: 113, y: 93, t: "X", s: 5, math: true },
  { x: 113, y: 104, t: "dX", s: 5, math: true },
  { x: 112, y: 115, t: "−μg", s: 5, math: true },
  { x: 129, y: 104, t: "B=", s: 5, math: true },
  { x: 154, y: 105, t: "U = Fₓ/M", s: 5, math: true },
  { x: 181, y: 101, t: "g=9.8", s: 4, math: true },
  { x: 181, y: 109, t: "μ=0.1", s: 4, math: true },
];

const thumb19: Line[] = [
  { x: 19, y: 27, t: "3.应用matlab将式（7-2）所示的连续型状态空间模型离散化" },
  { x: 48, y: 38, t: "Xₖ₊₁ = AₖXₖ + BₖUₖ", s: 5, math: true },
  { x: 114, y: 38, t: "（7-3）" },
  { x: 22, y: 48, t: "取离散系统采样时间为0.1秒，则式（7-3）中:" },
  { x: 34, y: 68, t: "Aₖ =", s: 5, math: true },
  { x: 91, y: 68, t: "Bₖ =", s: 5, math: true },
  { x: 138, y: 32, t: "%% 连续状态方程离散化(离散时间0.1s)", c: "#3a8f57" },
  { x: 138, y: 38, t: "A=[0 1 0;0 0 1;0 0 0];", math: true },
  { x: 138, y: 44, t: "B=[0;1;0];", math: true },
  { x: 138, y: 50, t: "C=[1 0 0;0 1 0;0 0 1];", math: true },
  { x: 138, y: 56, t: "D=[0;0;0];", math: true },
  { x: 138, y: 62, t: "sys_d = c2d(ss(A,B,C,D),0.1);", math: true },
  { x: 138, y: 68, t: "A1=sys_d.A;", math: true },
  { x: 138, y: 74, t: "B1=sys_d.B;", math: true },
  { x: 19, y: 88, t: "4.在系统中加入期望值==0，方差==Qw的过程噪声后, 式（7-3）重写为（7-4）:" },
  { x: 49, y: 96, t: "Xₖ=AₖXₖ₋₁+BₖUₖ₋₁+Wₖ₋₁", s: 5, math: true },
  { x: 132, y: 96, t: "（7-4）" },
  { x: 19, y: 107, t: "5.在测量系统中加入期望值==0，方差==Qv的测量噪声, 该控系统观测模型为:" },
  { x: 51, y: 117, t: "Zₖ=HₘXₖ+Vₖ", s: 5, math: true },
  { x: 110, y: 117, t: "（7-5）" },
  { x: 171, y: 105, t: "Hₘ =", s: 5, math: true },
];

const thumb20: Line[] = [
  { x: 19, y: 32, t: "实验a: 应用Matlab/Simulink进行仿真实验。设计实验初始状态为" },
  { x: 139, y: 31, t: "X₀ = X̂₀ = [0;10;−0.981]", s: 5, math: true },
  { x: 192, y: 32, t: "，即初始纵" },
  { x: 10, y: 39, t: "向位置为0m, 纵向速度为10m/s。今车辆的控制输入U=0.981, 则汽车从起始位置0开始，以10m/s的速度匀速" },
  { x: 10, y: 47, t: "直线行驶10s。仿真结果如下:" },
  { x: 36, y: 112, t: "纵向位移(m)" },
  { x: 99, y: 112, t: "纵向速度(m/s)" },
  { x: 152, y: 112, t: "−μg=−0.981", s: 7, math: true },
];

const thumb21: Line[] = [
  { x: 19, y: 34, t: "实验b: 在实验a的基础上，假设车辆系统模型" },
  { x: 102, y: 34, t: "过程噪声为", c: "#d2763f" },
  { x: 122, y: 34, t: "Qw, 传感器测量系统" },
  { x: 160, y: 34, t: "测量噪声", c: "#d2763f" },
  { x: 176, y: 34, t: "为Qv， 直接利用测" },
  { x: 10, y: 41, t: "量系统估计车辆状态。仿真结果如下:" },
  { x: 136, y: 54, t: "Qw=", s: 5, math: true },
  { x: 175, y: 54, t: "Qᵥ=", s: 5, math: true },
  { x: 28, y: 113, t: "速度信号" },
  { x: 93, y: 113, t: "位置信号" },
  { x: 159, y: 122, t: "测量噪声与过程噪声" },
];

const thumb22: Line[] = [
  { x: 19, y: 30, t: "实验b: 在实验b的基础上，应用卡尔曼滤波器估计车辆状态。仿真结果如下:" },
  { x: 161, y: 52, t: "卡尔曼滤波器的位" },
  { x: 161, y: 57, t: "移估计值与实际位", c: "#4d7a8a" },
  { x: 161, y: 62, t: "移高度吻合", c: "#cc5a4a" },
  { x: 161, y: 96, t: "卡尔曼滤波器的速" },
  { x: 161, y: 101, t: "度估计值与实际速", c: "#4d7a8a" },
  { x: 161, y: 106, t: "度高度吻合", c: "#cc5a4a" },
  ..."车辆位移估计".split("").map((t, i) => ({ x: 31, y: 44 + i * 5, t })),
  ..."车辆速度估计".split("").map((t, i) => ({ x: 31, y: 90 + i * 5, t })),
];

const thumb23: Line[] = [
  { x: 17, y: 93, t: "1.仿真采用定步长，仿真步长0.1秒，总仿真时间10秒;" },
  { x: 17, y: 100, t: "2.仿真模型建立过程中, 一定要注意仿真时序的关系，准确使用延迟信号模块;" },
  { x: 17, y: 108, t: "3.为防止奇异矩阵出现, 即防止矩阵没有逆矩阵, 采用pinv(__)函数求解伪矩阵。" },
];

const green = { fill: "none", stroke: "#3a9468", strokeWidth: 1 };
const sub7 = "七.基于卡尔曼滤波估计系统状态";

const thumbs: { no: number; art: ReactNode; selected?: boolean }[] = [
  { no: 15, art: <Lines items={thumb15} /> },
  {
    no: 16,
    art: (
      <>
        <ThumbTitle title="卡尔曼滤波原理浅析" sub="六.线性卡尔曼滤波器（核心）" />
        <Lines items={thumb16} />
        <path d="M45 103h46" stroke="#222" strokeWidth=".7" />
        <rect x="8" y="115" width="207" height="8" {...green} />
      </>
    ),
  },
  {
    no: 17,
    art: (
      <>
        <ThumbTitle title="卡尔曼滤波原理浅析" sub="六.线性卡尔曼滤波器（核心）" />
        <rect x="12" y="32" width="92" height="50" {...green} />
        <rect x="12" y="89" width="92" height="22" {...green} />
        <rect x="117" y="32" width="98" height="76" {...green} />
        <rect x="8" y="114" width="207" height="9" {...green} />
        <Lines items={thumb17} />
        <path d="M144 57h46" stroke="#222" strokeWidth=".7" />
        <path d="M106 57h7v-2l4 3-4 3v-2h-7zM116 71h-7v-2l-4 3 4 3v-2h7zM54 89v-4h-2l3-4 3 4h-2v4z" fill="#2f5f8a" />
      </>
    ),
  },
  {
    no: 18,
    art: (
      <>
        <ThumbTitle title="卡尔曼滤波仿真实例" sub={sub7} />
        <Lines items={thumb18} />
        <path d="M167 38h27M170 36l-3 2 3 2M191 36l3 2-3 2" fill="none" stroke="#3b6db0" strokeWidth=".8" />
        <rect x="176" y="35" width="8" height="6" fill="#3b6db0" stroke="#222" strokeWidth=".5" />
        <Brackets x={38} y={84} w={14} h={36} />
        <MiniMatrix x={69} y={90} rows={[["0", "1", "0"], ["0", "0", "1"], ["0", "0", "0"]]} />
        <Brackets x={110} y={88} w={13} h={28} />
        <MiniMatrix x={139} y={90} rows={[["0"], ["1"], ["0"]]} />
      </>
    ),
  },
  {
    no: 19,
    art: (
      <>
        <ThumbTitle title="卡尔曼滤波仿真实例" sub={sub7} />
        <Lines items={thumb19} />
        <path d="M136 28h82" stroke="#3a8f57" strokeWidth=".6" />
        <MiniMatrix x={43} y={54} step={12} rows={[["1", "0.1", "0.005"], ["0", "1", "0.1"], ["0", "0", "1"]]} />
        <MiniMatrix x={102} y={54} step={16} rows={[["0.005"], ["0.1"], ["0"]]} />
        <MiniMatrix x={183} y={92} rows={[["1", "0", "0"], ["0", "1", "0"], ["0", "0", "1"]]} />
      </>
    ),
  },
  {
    no: 20,
    art: (
      <>
        <ThumbTitle title="卡尔曼滤波仿真实例" sub="八.仿真实验分析" />
        <Lines items={thumb20} />
        <MiniScope x={24} y={55} w={54} h={44}><path d="M26 96 77 65" stroke="#7b7b3a" /></MiniScope>
        <MiniScope x={84} y={55} w={54} h={44}><path d="M85 80h52" stroke="#6b6b35" /></MiniScope>
        <MiniScope x={146} y={55} w={52} h={44}><path d="M147 80h50" stroke="#6b6b35" /></MiniScope>
      </>
    ),
  },
  {
    no: 21,
    selected: true,
    art: (
      <>
        <ThumbTitle title="卡尔曼滤波仿真实例" sub={sub7} />
        <Lines items={thumb21} />
        <MiniMatrix x={149} y={41} rows={[["5", "0", "0"], ["0", "3", "0"], ["0", "0", "0"]]} />
        <MiniMatrix x={186} y={41} rows={[["20", "0", "0"], ["0", "8", "0"], ["0", "0", "0"]]} />
        <MiniScope x={8} y={50} w={57} h={50}>
          <polyline points={trace(speedReal, 272, 1069, 9, 57, 55, 42)} stroke="#8f9a4a" />
          <polyline points={trace(speedMeas, 272, 1069, 9, 57, 55, 42)} stroke="#3f8a8f" />
        </MiniScope>
        <MiniScope x={71} y={50} w={59} h={50}>
          <polyline points={trace(posReal, 275, 1093, 72, 57, 57, 42)} stroke="#7fb0a0" />
        </MiniScope>
        <MiniScope x={137} y={68} w={37} h={43}>
          <polyline points={trace(measNoise, 805, 1403, 138, 75, 35, 35)} stroke="#8f9a4a" />
          <polyline points={trace(damp(measNoise, 1115, 0.6), 805, 1403, 138, 75, 35, 35)} stroke="#3f8a8f" />
        </MiniScope>
        <MiniScope x={175} y={68} w={37} h={43}>
          <polyline points={trace(procNoise, 805, 1403, 176, 75, 35, 35)} stroke="#8f9a4a" />
          <polyline points={trace(damp(procNoise, 1079, 0.7), 805, 1403, 176, 75, 35, 35)} stroke="#3f8a8f" />
        </MiniScope>
      </>
    ),
  },
  {
    no: 22,
    art: (
      <>
        <ThumbTitle title="卡尔曼滤波仿真实例" sub={sub7} />
        <Lines items={thumb22} />
        <MiniScope x={47} y={35} w={51} h={38}><polyline points={trace(posReal, 275, 1093, 48, 42, 49, 30)} stroke="#a0a04a" /></MiniScope>
        <MiniScope x={107} y={35} w={48} h={38}><polyline points={trace(posReal, 275, 1093, 108, 42, 46, 30)} stroke="#3f7a5a" /></MiniScope>
        <MiniScope x={47} y={82} w={51} h={37}><polyline points={trace(speedMeas, 272, 1069, 48, 89, 49, 29)} stroke="#b0b04a" /></MiniScope>
        <MiniScope x={106} y={82} w={50} h={37}><polyline points={trace(speedReal, 272, 1069, 107, 89, 48, 29)} stroke="#3f8a7a" /></MiniScope>
      </>
    ),
  },
  {
    no: 23,
    art: (
      <>
        <ThumbTitle title="卡尔曼滤波仿真模型" />
        <path d="M16 19h83v18H16zM16 39h83v42H16zM101 19h105v62H101z" fill="#e3e3fa" stroke="#c9c9de" strokeWidth=".6" />
        <g fill="#fff" stroke="#666" strokeWidth=".5">
          <path d="M32 28h4v3h-4zM43 27h11v5H43zM57 24h6v6h-6zM70 23h5v3h-5zM70 28h5v3h-5zM79 24h4v10h-4zM58 32h4v3h-4z" />
          <path d="M36 45h9v27h-9zM28 49h3v3h-3zM28 54h3v3h-3zM28 59h3v3h-3zM49 50h4v3h-4zM60 50h4v4h-4zM60 57h4v3h-4zM49 63h4v3h-4zM60 63h4v3h-4zM21 64h3v4h-3zM28 67h4v5h-4zM39 75h4v4h-4z" />
          <path d="M86 39h5v4h-5zM86 45h5v4h-5zM81 57h5v4h-5zM88 54h4v4h-4zM94 52h4v3h-4zM86 65h5v4h-5zM86 71h5v4h-5zM86 76h5v3h-5z" />
          <path d="M118 30h11v38h-11zM107 35h4v3h-4zM112 40h4v3h-4zM107 46h4v3h-4zM112 52h4v3h-4zM107 57h4v3h-4zM134 35h4v3h-4zM141 34h4v4h-4zM137 48h4v3h-4zM148 42h6v4h-6zM163 37h5v10h-5zM155 40h6v3h-6zM172 37h4v4h-4zM181 35h5v8h-5zM193 34h5v3h-5zM200 31h4v9h-4zM121 72h5v3h-5z" />
        </g>
        <path d="M36 29h7M54 29h3M63 27h7M24 64V48M45 52h4M53 52h7M45 64h4M53 64h7M64 58h10M76 55l6-15M76 58h10M76 62l8 12M129 36h5M138 36h3M129 50h8M141 50h30M148 36h45M115 30v-3h24v8M108 60v19M195 40v13h-47" fill="none" stroke="#888" strokeWidth=".4" />
        <path d="M65 23v12M75 53v12M148 31v9M148 45v9" stroke="#333" strokeWidth="1" />
        <Lines items={thumb23} />
      </>
    ),
  },
];

function ThumbPanel() {
  return (
    <aside className="flex w-[300px] shrink-0 overflow-hidden border-r border-[#cfd5d7]">
      <ol className="-mt-[83px] flex flex-1 flex-col justify-between pb-[34px]">
        {thumbs.map((t) => (
          <li key={t.no} className="flex h-[125px]">
            <span className={`w-[18px] font-['Noto_Sans_CJK_SC',sans-serif] text-base leading-5 ${t.selected ? "text-[#c4492c]" : "text-[#444]"}`}>{t.no}</span>
            <button
              aria-label={`幻灯片 ${t.no}`}
              className={`ml-[15px] h-[125px] w-[221px] shrink-0 overflow-hidden rounded-md bg-white ${t.selected ? "ring-3 ring-[#5e141c]" : "shadow-sm ring-1 ring-[#bcc0c1]"}`}
            >
              <svg viewBox="0 0 222 125" className="h-full w-full">{t.art}</svg>
            </button>
          </li>
        ))}
      </ol>
      <div className="mr-[3px] flex w-[19px] flex-col items-center rounded-full bg-[#f3f4f4] text-[#6a6a6a]">
        <button aria-label="向上滚动" className="mt-1">
          <svg viewBox="0 0 10 8" className="h-2 w-2.5" fill="currentColor"><path d="M5 0 10 8H0z" /></svg>
        </button>
        <span className="mt-auto h-[445px] w-[9px] rounded-full bg-[#707070]" />
        <button aria-label="向下滚动" className="mt-1.5 mb-1.5">
          <svg viewBox="0 0 10 8" className="block h-2 w-2.5" fill="currentColor"><path d="M5 8 0 0h10z" /></svg>
        </button>
      </div>
    </aside>
  );
}

/* ---------- scope windows on the slide ---------- */

type Axes = { x: number; y: number; w: number; h: number; xt: string[]; yt: { v: string; y: number }[]; title: string };

function Plot({ ax, children }: { ax: Axes; children: ReactNode }) {
  const step = ax.w / (ax.xt.length - 1);
  return (
    <g fontSize="8" fontFamily='"Liberation Sans","Noto Sans CJK SC",sans-serif' fill="#a5a5a5">
      <rect x={ax.x} y={ax.y} width={ax.w} height={ax.h} fill="#000" stroke="#8a8a8a" />
      {ax.xt.map((t, i) => (
        <g key={t}>
          <path d={`M${ax.x + step * i} ${ax.y}v${ax.h}`} stroke="#4c4c4c" />
          <path d={`M${ax.x + step * i} ${ax.y}v4M${ax.x + step * i} ${ax.y + ax.h}v-4`} stroke="#aaa" />
          <text x={ax.x + step * i} y={ax.y + ax.h + 9} textAnchor="middle">{t}</text>
        </g>
      ))}
      {ax.yt.map((t) => (
        <g key={t.v}>
          <path d={`M${ax.x} ${t.y}h${ax.w}`} stroke="#484848" />
          <path d={`M${ax.x} ${t.y}h4M${ax.x + ax.w} ${t.y}h-4`} stroke="#aaa" />
          <text x={ax.x - 1} y={t.y + 3} textAnchor="end">{t.v}</text>
        </g>
      ))}
      <text x={ax.x + ax.w / 2} y={ax.y - 4} fontSize="10" textAnchor="middle" fill="#9a9a9a">{ax.title}</text>
      <g fill="none" strokeWidth="1">{children}</g>
    </g>
  );
}

function Legend({ x, y, names }: { x: number; y: number; names: [string, string] }) {
  return (
    <g fontSize="8" fontFamily='"Noto Sans CJK SC",sans-serif' fill="#aaa">
      <rect x={x} y={y} width="72" height="25" fill="#000" stroke="#bbb" />
      <path d={`M${x + 4} ${y + 8}h30`} stroke="#c9cc55" />
      <path d={`M${x + 4} ${y + 19}h30`} stroke="#3a82b8" />
      <text x={x + 37} y={y + 11}>{names[0]}</text>
      <text x={x + 37} y={y + 22}>{names[1]}</text>
    </g>
  );
}

const menus = [["文件", "F"], ["工具", "T"], ["视图", "V"], ["仿真", "I"], ["帮助", "H"]];

function Tool({ label, children, caret, sep }: { label: string; children: ReactNode; caret?: boolean; sep?: boolean }) {
  return (
    <>
      <button aria-label={label} className="flex items-center">
        <svg viewBox="0 0 14 14" className="h-[13px] w-[13px]" fill="none" stroke="#555" strokeWidth="1.3">{children}</svg>
        {caret && <svg viewBox="0 0 4 3" className="ml-1 h-[3px] w-1" fill="#333"><path d="M0 0h4L2 3z" /></svg>}
      </button>
      {sep && <span className="h-4 w-px bg-[#b5b5b5]" />}
    </>
  );
}

function ScopeWindow({ name, className, children }: { name: string; className: string; children: ReactNode }) {
  return (
    <article className={`${className} flex flex-col overflow-hidden bg-white font-['Open_Sans','Noto_Sans_CJK_SC',sans-serif] text-[10px] font-normal text-[#222]`}>
      <div className="flex h-[19px] shrink-0 items-center bg-[#ebf1f6] pr-2.5 pl-1.5">
        <svg viewBox="0 0 12 12" className="h-3 w-3"><path d="M.5.5h11v11H.5z" fill="#f5f5f5" stroke="#9aa5ad" /><path d="m1 7 3-1 3-4 4 7-2-1-2 2z" fill="#c8452a" /><path d="m1 7 3-1 1 2-2 1z" fill="#2a5a8a" /></svg>
        <span className="ml-[3px]">{name}</span>
        <span className="ml-auto flex gap-[26px]">
          <button aria-label="最小化"><Icon size="h-2 w-2" box="0 0 8 8"><path d="M0 4h8" /></Icon></button>
          <button aria-label="最大化"><Icon size="h-2 w-2" box="0 0 8 8"><path d="M.5.5h7v7h-7z" /></Icon></button>
          <button aria-label="关闭"><Icon size="h-2 w-2" box="0 0 8 8"><path d="m.5.5 7 7M7.500.5l-7 7" /></Icon></button>
        </span>
      </div>
      <div className="flex h-[19px] shrink-0 items-center gap-2.5 pl-[5px]">
        {menus.map(([m, k]) => (
          <button key={k} className="whitespace-nowrap">{m}(<u>{k}</u>)</button>
        ))}
        <svg viewBox="0 0 5 5" className="ml-auto h-[5px] w-[5px]"><path d="M5 0v5H0zM0 0l4 4" fill="#111" stroke="#111" /></svg>
      </div>
      <div className="flex h-[21px] shrink-0 items-center gap-[5px] border-y border-[#c9c9c9] bg-[#f0f0f0] pl-[3px]">
        <Tool label="配置" caret sep><circle cx="7" cy="7" r="5.2" strokeWidth="2" strokeDasharray="2.6 .6" stroke="#777" /><circle cx="7" cy="7" r="2.2" /></Tool>
        <Tool label="步退"><path d="M7 2 1 6l6 4z" fill="#9cc3dd" stroke="#5c86a3" /><circle cx="9" cy="8.5" r="3.5" fill="#ddd" /><circle cx="9" cy="8.5" r="1" /></Tool>
        <Tool label="运行"><circle cx="7" cy="7" r="6" fill="#c3e08a" stroke="#5d8a28" /><path d="M5 4v6l5-3z" fill="#222" stroke="none" /></Tool>
        <Tool label="步进"><path d="M1 2h2v10H1zM6 2v10l6-5z" fill="#b9d7ea" stroke="#4a8ab5" strokeWidth="1" /></Tool>
        <Tool label="停止" sep><circle cx="7" cy="7" r="6" fill="#999" stroke="#888" /><path d="M5 5h4v4H5z" fill="#777" stroke="none" /></Tool>
        <Tool label="触发" caret sep><path d="M1 3.500h5M6 3.500c4 0-1 7 3 7M3 7h3M10 6h3M9 10.500h4" stroke="#d98b3a" strokeWidth="2" /></Tool>
        <Tool label="缩放" caret sep><circle cx="5.5" cy="5.5" r="4" /><path d="m9 9 4 4" strokeWidth="2.2" /><path d="M4 5.500h3M5.500 4v3" /></Tool>
        <Tool label="适应" caret sep><path d="M1 1h12v12H1z" strokeWidth="1" /><path d="m3 3 2 2M11 3 9 5M3 11l2-2M11 11 9 9M7 3v1.500M7 11V9.500M3 7h1.500M11 7H9.500" strokeWidth="1.8" stroke="#333" /></Tool>
        <Tool label="信号"><path d="M2 9h5M1 12h5M7 12V3h5M6 6h6" stroke="#333" strokeWidth="2" /></Tool>
        <Tool label="测量" caret><path d="M1 1h12v12H1z" fill="#eef6fb" stroke="#999" /><path d="m3 10 7-8 2 2-7 8z" fill="#bcdcee" stroke="#5a90b0" /></Tool>
      </div>
      <div className="min-h-0 flex-1 border-t-2 border-white bg-[#282828]">{children}</div>
      <div className="flex h-5 shrink-0 items-center gap-1 bg-[#f0f0f0] text-[9px] leading-4 font-semibold">
        就绪
        <span className="ml-auto border-t border-l border-[#b5b5b5] px-0.5 text-[8px]">基于采样</span>
        <span className="border-t border-l border-[#b5b5b5] px-0.5 font-['Liberation_Sans',sans-serif] font-normal">T=10.000</span>
      </div>
    </article>
  );
}

const tens = ["0", "1", "2", "3", "4", "5", "6", "7", "8", "9", "10"];
const evens = ["0", "2", "4", "6", "8", "10"];

const speedAxes: Axes = {
  x: 12, y: 15, w: 402, h: 266, xt: tens, title: "实际速度,测量速度",
  yt: [{ v: "30", y: 19 }, { v: "25", y: 75 }, { v: "20", y: 132 }, { v: "15", y: 188 }, { v: "10", y: 245 }],
};
const posAxes: Axes = {
  x: 18, y: 16, w: 407, h: 273, xt: tens, title: "实际位置,测量位置",
  yt: [{ v: "200", y: 33 }, { v: "150", y: 90 }, { v: "100", y: 147 }, { v: "50", y: 204 }, { v: "0", y: 261 }],
};
const measAxes: Axes = {
  x: 16, y: 16, w: 245, h: 214, xt: evens, title: "测量噪声",
  yt: [{ v: "10", y: 38 }, { v: "5", y: 82 }, { v: "0", y: 127 }, { v: "-5", y: 172 }, { v: "-10", y: 217 }],
};
const procAxes: Axes = {
  x: 281, y: 16, w: 249, h: 214, xt: evens, title: "过程噪声",
  yt: [{ v: "4", y: 46 }, { v: "2", y: 81 }, { v: "0", y: 114 }, { v: "-2", y: 149 }, { v: "-4", y: 182 }, { v: "-6", y: 216 }],
};

function PinMark({ x }: { x: number }) {
  return <path d={`M${x} 0h7v6h-7zM${x + 3} 2v3`} fill="#111" stroke="#ddd" />;
}

function Matrix({ sub, rows, cols }: { sub: string; rows: string[][]; cols: string }) {
  return (
    <div className="flex items-center font-['Liberation_Serif',serif] text-[40px] leading-none font-normal">
      <span className="font-bold">Q</span>
      <i className="mt-6 ml-0.5 text-[24px]">{sub}</i>
      <span className="mx-2.5">=</span>
      <div className="flex h-[162px]">
        <span className="-mr-3 w-3 border-y-2 border-l-2 border-black" />
        <div className={`-my-2 grid ${cols} place-items-center`}>
          {rows.flat().map((v, i) => <span key={i}>{v}</span>)}
        </div>
        <span className="-ml-3 w-3 border-y-2 border-r-2 border-black" />
      </div>
    </div>
  );
}

function Slide() {
  return (
    <div className="flex aspect-video w-full flex-col overflow-hidden border border-[#b9c0c2] bg-white font-['Noto_Sans_CJK_SC',sans-serif] font-[350] text-black">
      <h2 className="mt-4 pr-1 text-center text-[46px] leading-[60px]">卡尔曼滤波仿真实例</h2>
      <h3 className="mt-[22px] ml-16 text-[33px] leading-[48px] text-[#a3a3a3]">七.基于卡尔曼滤波估计系统状态</h3>
      <p className="mt-[31px] ml-[67px] text-[30px] leading-[53px] whitespace-nowrap">
        <span className="ml-16">实验b：在实验a的基础上，</span>
        <span className="text-[#44565f]">假设车辆系统模型</span>
        <span className="text-[#d0803a]">过程噪声为</span>
        <span className="underline decoration-[#d05050] decoration-wavy decoration-1 underline-offset-4">
          Q<sub className="text-xl leading-none">w,</sub>
        </span>
        <span className="ml-3 text-[#44565f]">传感器测量系统</span>
        <span className="text-[#d0803a]">测量噪声</span>
        为Q<sub className="mr-2 text-xl leading-none">v</sub>，直接利用测
        <br />
        量系统估计车辆状态。仿真结果如下：
      </p>
      <div className="-mt-1.5 flex items-start pl-[51px]">
        <figure className="mt-[60px] flex w-[420px] shrink-0 flex-col items-center">
          <ScopeWindow name="Scope6" className="h-[376px] w-full">
            <svg viewBox="0 0 420 295" className="block h-full w-full">
              <Plot ax={speedAxes}>
                <polyline points={trace(speedMeas, 272, 1069, 12, 15, 402, 266)} stroke="#2f75aa" />
                <polyline points={trace(speedReal, 272, 1069, 12, 15, 402, 266)} stroke="#c3cf6a" />
              </Plot>
              <Legend x={22} y={22} names={["实际速度", "测量速度"]} />
              <PinMark x={412} />
            </svg>
          </ScopeWindow>
          <figcaption className="mt-[41px] pr-5 text-[30px] leading-[44px]">速度信号</figcaption>
        </figure>
        <figure className="mt-[57px] ml-[31px] flex w-[433px] shrink-0 flex-col items-center">
          <ScopeWindow name="Scope9" className="h-[384px] w-full">
            <svg viewBox="0 0 433 303" className="block h-full w-full">
              <Plot ax={posAxes}>
                <polyline points={trace(posMeas, 275, 1093, 18, 16, 407, 273)} stroke="#3a82b8" />
                <polyline points={trace(posReal, 275, 1093, 18, 16, 407, 273)} stroke="#b5d08a" />
              </Plot>
              <Legend x={45} y={28} names={["实际位置", "测量位置"]} />
              <PinMark x={425} />
            </svg>
          </ScopeWindow>
          <figcaption className="mt-9 text-[30px] leading-[44px]">位置信号</figcaption>
        </figure>
        <div className="ml-[37px] flex flex-col">
          <div className="flex gap-[18px]">
            <Matrix sub="w" cols="grid-cols-[54px_56px_54px]" rows={[["5", "0", "0"], ["0", "3", "0"], ["0", "0", "0"]]} />
            <Matrix sub="v" cols="grid-cols-[70px_62px_50px]" rows={[["20", "0", "0"], ["0", "8", "0"], ["0", "0", "0"]]} />
          </div>
          <figure className="mt-6 ml-1 flex w-[540px] flex-col items-center">
            <ScopeWindow name="Scope8" className="h-[326px] w-full">
              <svg viewBox="0 0 540 245" className="block h-full w-full">
                <Plot ax={measAxes}>
                  <polyline points={trace(measNoise, 805, 1403, 16, 16, 245, 214)} stroke="#b9bd3c" />
                  <polyline points={trace(damp(measNoise, 1115, 0.63), 805, 1403, 16, 16, 245, 214)} stroke="#3a8fb0" />
                  <path d="M16 127h245" stroke="#9c5a44" />
                </Plot>
                <Plot ax={procAxes}>
                  <polyline points={trace(procNoise, 805, 1403, 281, 16, 249, 214)} stroke="#b9bd3c" />
                  <polyline points={trace(damp(procNoise, 1079, 0.8), 805, 1403, 281, 16, 249, 214)} stroke="#3a8fb0" />
                  <path d="M281 114h249" stroke="#9c5a44" />
                </Plot>
                <PinMark x={531} />
              </svg>
            </ScopeWindow>
            <figcaption className="mt-[26px] ml-8 text-[30px] leading-[44px]">测量噪声与过程噪声</figcaption>
          </figure>
        </div>
      </div>
    </div>
  );
}

function StatusBar() {
  return (
    <footer className="-mb-[15px] flex h-6 shrink-0 items-start border-t border-white bg-[#f5f5f5] pt-[1px] text-sm leading-5 text-[#222]">
      <button className="ml-[205px]">简体中文(中国大陆)</button>
      <button className="ml-5 flex items-center gap-1 whitespace-nowrap">
        <Icon size="h-3.5 w-3.5"><circle cx="9" cy="3" r="2" /><path d="M2 6h14M9 6v5M9 11l-4 6M9 11l4 6" /></Icon>
        辅助功能: 调查
      </button>
      <button className="ml-auto flex items-center gap-2.5">
        <Icon size="h-3 w-3"><path d="m3 7 6-6 6 6M1 11h16M1 15h16" /></Icon>
        备注
      </button>
      <button aria-label="普通视图" className="ml-5 flex h-6 w-[45px] justify-center bg-[#dedede] pt-1">
        <Icon size="h-4 w-4"><path d="M1 1h16v14H1zM5 1v14" fill="#999" strokeWidth="2" /></Icon>
      </button>
      <button aria-label="幻灯片浏览" className="mt-1 ml-[15px]"><Icon size="h-4 w-4"><path d="M1 1h6v6H1zM11 1h6v6h-6z" fill="#999" strokeWidth="2" /></Icon></button>
      <button aria-label="阅读视图" className="mt-0.5 ml-[29px]"><Icon size="h-4 w-4"><path d="M1 15V2c3-1 6-1 8 1 2-2 5-2 8-1v13" strokeWidth="2" /></Icon></button>
      <button aria-label="放映" className="mt-1 ml-[29px]"><Icon size="h-4 w-4"><path d="M0 1h18M2 1v9h14V1" strokeWidth="2" /></Icon></button>
      <span className="mt-1 ml-[93px] h-3 w-[5px] bg-[#666]" />
      <button aria-label="适应窗口" className="mt-0.5 mr-1 ml-[134px]"><Icon size="h-3 w-3"><path d="m3 7 6-6 6 6" strokeWidth="2" /></Icon></button>
    </footer>
  );
}

export default function App() {
  return (
    <div className="flex h-screen flex-col overflow-hidden bg-[#e6edef] font-['Open_Sans','Noto_Sans_CJK_SC',sans-serif] text-[#262626]">
      <TitleBar />
      <TabBar />
      <Ribbon />
      <div className="flex min-h-0 flex-1">
        <ThumbPanel />
        <main className="flex min-w-0 flex-1 flex-col bg-linear-to-b from-[#e6edef] to-[#e3e8ea]">
          <div className="flex flex-1 items-center pr-4 pb-1 pl-4">
            <Slide />
          </div>
          <textarea
            aria-label="备注"
            placeholder="单击此处添加备注"
            className="ml-0.5 h-[70px] shrink-0 resize-none border-t border-[#cdd3d5] bg-transparent px-[11px] pt-1.5 text-[17px] outline-none placeholder:text-[#555]"
          />
        </main>
      </div>
      <StatusBar />
    </div>
  );
}
